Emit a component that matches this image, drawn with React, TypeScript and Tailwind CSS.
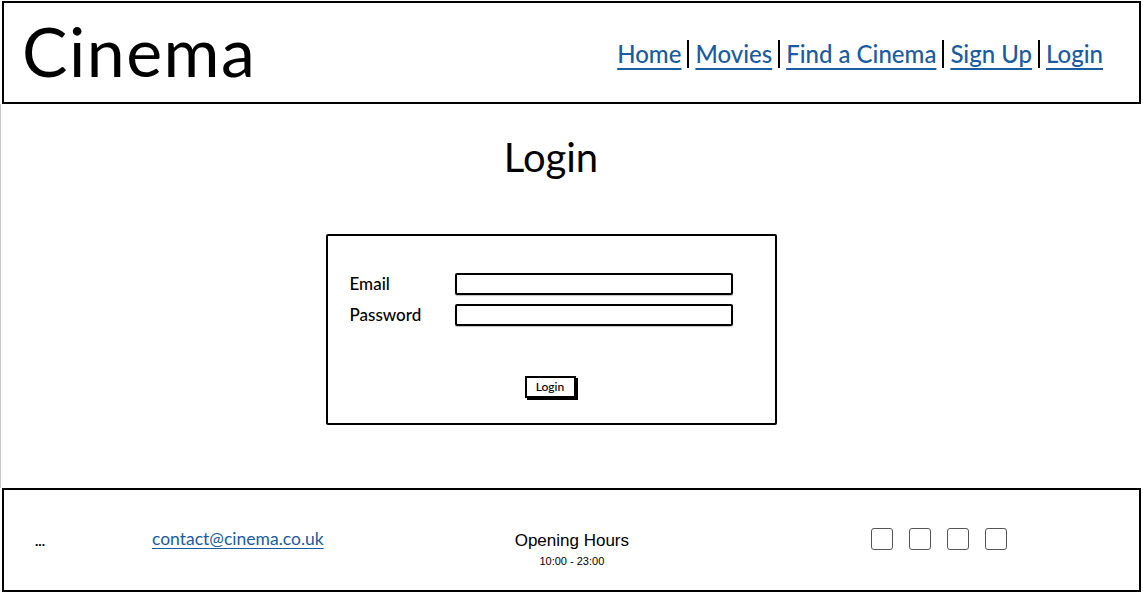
import React from "react";

const sketch = "font-['Lato','Noto_Sans',sans-serif]";

function NavLink({ text, last }: { text: string; last?: boolean }) {
  return (
    <div className="flex items-center">
      <a href="#" className="text-[#1b5c9e] font-medium underline decoration-2 underline-offset-[5px] text-[24px] leading-none">
        {text}
      </a>
      {!last && <span className="mx-[6px] h-[28px] w-[2px] bg-black" />}
    </div>
  );
}

export default function App() {
  return (
    <div className={`w-[1143px] h-[595px] bg-white flex flex-col ${sketch}`}>
      <header className="mx-[2px] mt-[1px] h-[103px] border-2 border-black flex items-center justify-between pl-[18px] pr-[36px] shrink-0">
        <h1 className="text-[68px] leading-none text-black tracking-[1.5px] -mt-[4px]">Cinema</h1>
        <nav className="flex items-center pt-[2px]">
          <NavLink text="Home" />
          <NavLink text="Movies" />
          <NavLink text="Find a Cinema" />
          <NavLink text="Sign Up" />
          <NavLink text="Login" last />
        </nav>
      </header>

      <main className="flex-1 border-l border-[#c8c8c8] flex flex-col items-center pr-[42px]">
        <h2 className="mt-[33px] text-[40px] leading-none text-black">Login</h2>
        <div className="mt-[57px] w-[451px] h-[191px] border-2 border-black rounded-[2px] flex flex-col pl-[22px] pt-[37px]">
          <div className="flex items-center h-[22px]">
            <span className="w-[105px] text-[17px] font-medium text-black">Email</span>
            <div className="w-[278px] h-[22px] border-2 border-black rounded-[2px] shadow-[0_1px_1px_rgba(0,0,0,0.25)]" />
          </div>
          <div className="flex items-center h-[22px] mt-[9px]">
            <span className="w-[105px] text-[17px] font-medium text-black">Password</span>
            <div className="w-[278px] h-[22px] border-2 border-black rounded-[2px] shadow-[0_1px_1px_rgba(0,0,0,0.25)]" />
          </div>
          <div className="flex justify-center mt-[50px] pr-[24px]">
            <button className="w-[51px] h-[22px] border-2 border-black bg-white text-[12px] font-medium leading-none text-black shadow-[2px_2px_0_#000]">
              Login
            </button>
          </div>
        </div>
      </main>

      <footer className="mx-[2px] mb-[3px] h-[104px] border-2 border-black flex items-center shrink-0">
        <span className="ml-[31px] text-[14px] font-bold text-black mt-[1px]">...</span>
        <a href="#" className="ml-[107px] text-[17.5px] text-[#1b5c9e] underline underline-offset-[3px] -mt-[2px]">
          contact@cinema.co.uk
        </a>
        <div className="ml-[191px] flex flex-col items-center font-['Liberation_Sans',Arial,sans-serif] text-black mt-[19px]">
          <span className="text-[17px] leading-none">Opening Hours</span>
          <span className="text-[11px] leading-none mt-[7px]">10:00 - 23:00</span>
        </div>
        <div className="ml-[242px] flex gap-[16px] -mt-[2px]">
          <div className="w-[22px] h-[22px] border border-[#555] rounded-[3px]" />
          <div className="w-[22px] h-[22px] border border-[#555] rounded-[3px]" />
          <div className="w-[22px] h-[22px] border border-[#555] rounded-[3px]" />
          <div className="w-[22px] h-[22px] border border-[#555] rounded-[3px]" />
        </div>
      </footer>
    </div>
  );
}
